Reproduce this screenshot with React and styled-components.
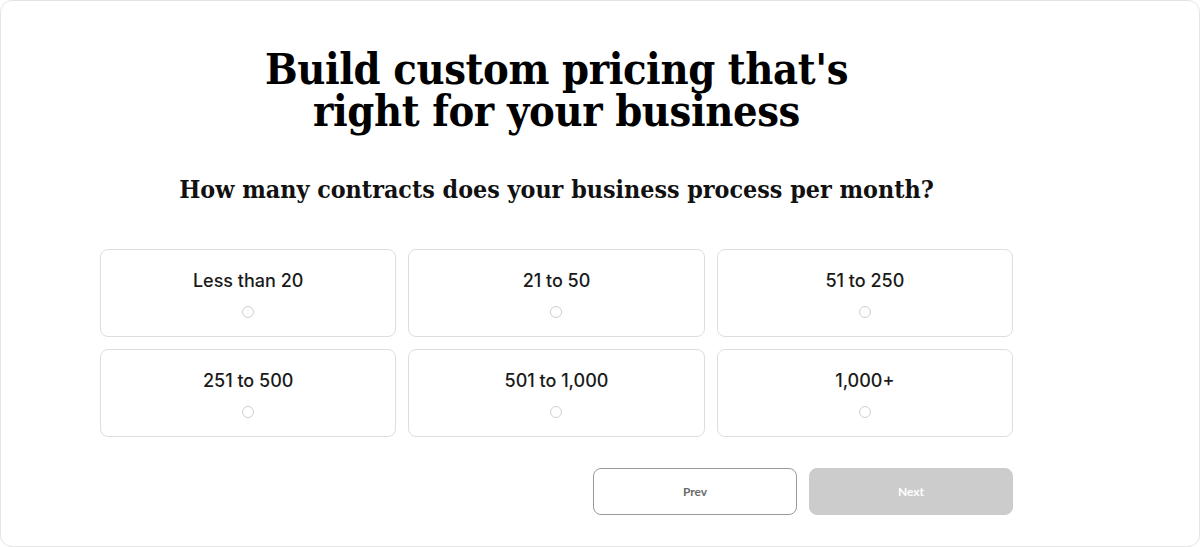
import React, { useState } from 'react';
import styled, { createGlobalStyle } from 'styled-components';

const GlobalStyle = createGlobalStyle`
    html, body {
        margin: 0;
        padding: 0;
        background: #ffffff;
    }
    * {
        box-sizing: border-box;
    }
`;

const Frame = styled.div`
    width: 1200px;
    height: 547px;
    border: 1px solid #e4e4e4;
    border-radius: 12px;
    background: #ffffff;
    padding: 47px 0 0 99px;
`;

const Content = styled.div`
    width: 913px;
    display: flex;
    flex-direction: column;
    align-items: center;
`;

const Title = styled.h1`
    margin: 0;
    font-family: "DejaVu Serif Condensed", "DejaVu Serif", serif;
    font-stretch: condensed;
    font-weight: 700;
    font-size: 43px;
    line-height: 42px;
    text-align: center;
    color: #000;
    letter-spacing: -0.4px;
`;

const Question = styled.h2`
    margin: 44px 0 0;
    font-family: "DejaVu Serif Condensed", "DejaVu Serif", serif;
    font-stretch: condensed;
    font-weight: 700;
    font-size: 24.8px;
    line-height: 28px;
    color: #111;
    text-align: center;
`;

const Options = styled.div`
    width: 100%;
    margin-top: 45px;
    display: grid;
    grid-template-columns: repeat(3, 1fr);
    grid-auto-rows: 88px;
    gap: 12px 12px;
`;

const Option = styled.label`
    display: flex;
    flex-direction: column;
    align-items: center;
    padding-top: 20px;
    border: 1px solid ${(p) => (p.$active ? '#999' : '#dedede')};
    border-radius: 8px;
    background: #fff;
    cursor: pointer;
`;

const OptionText = styled.span`
    font-family: "Inter", "Noto Sans", sans-serif;
    font-weight: 500;
    font-size: 18px;
    line-height: 22px;
    color: #1a1a1a;
`;

const Radio = styled.span`
    margin-top: 14px;
    width: 12px;
    height: 12px;
    border-radius: 50%;
    border: 1px solid ${(p) => (p.$active ? '#333' : '#cfcfcf')};
    background: ${(p) => (p.$active ? '#333' : '#fff')};
`;

const Actions = styled.div`
    width: 100%;
    margin-top: 31px;
    display: flex;
    justify-content: flex-end;
    gap: 12px;
`;

const Button = styled.button`
    width: 204px;
    height: 47px;
    border-radius: 8px;
    font-family: "Lato", "Liberation Sans", sans-serif;
    font-weight: 700;
    font-size: 12px;
    cursor: pointer;
    border: 1px solid ${(p) => (p.$primary ? '#cccccc' : '#9a9a9a')};
    background: ${(p) => (p.$primary ? '#cccccc' : '#ffffff')};
    color: ${(p) => (p.$primary ? '#ffffff' : '#6a6a6a')};
    &:disabled {
        cursor: default;
    }
`;

const options = [
    'Less than 20',
    '21 to 50',
    '51 to 250',
    '251 to 500',
    '501 to 1,000',
    '1,000+',
];

const App = () => {
    const [selected, setSelected] = useState(null);

    return (
        <>
            <GlobalStyle />
            <Frame>
                <Content>
                    <Title>
                        Build custom pricing that's
                        <br />
                        right for your business
                    </Title>
                    <Question>How many contracts does your business process per month?</Question>
                    <Options>
                        {options.map((opt, i) => (
                            <Option key={opt} $active={selected === i} onClick={() => setSelected(i)}>
                                <OptionText>{opt}</OptionText>
                                <Radio $active={selected === i} />
                            </Option>
                        ))}
                    </Options>
                    <Actions>
                        <Button type="button">Prev</Button>
                        <Button type="button" $primary disabled={selected === null}>
                            Next
                        </Button>
                    </Actions>
                </Content>
            </Frame>
        </>
    );
};

export default App;
